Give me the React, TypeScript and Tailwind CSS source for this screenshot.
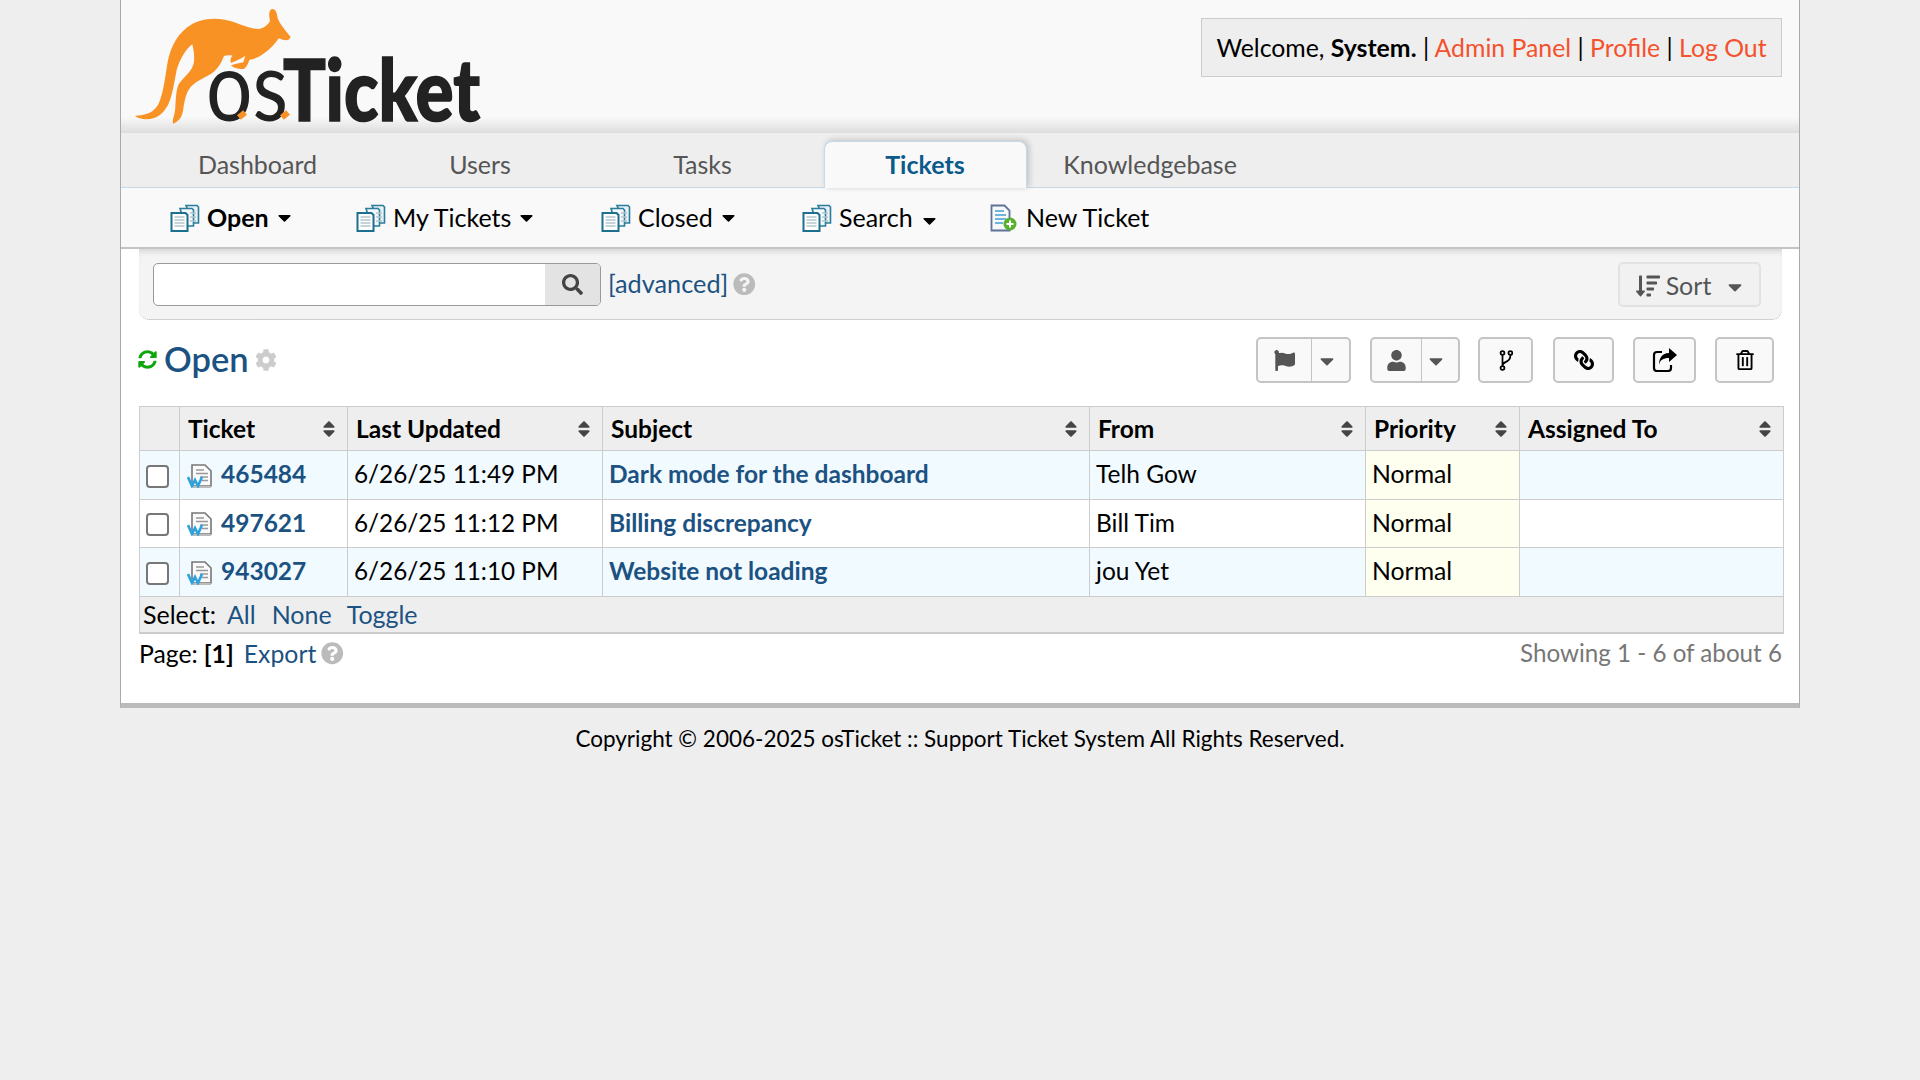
import React from "react";
import { FaFlag, FaUser, FaLink, FaRegTrashAlt, FaSearch, FaSyncAlt, FaCog, FaQuestionCircle, FaSortAmountDown, FaSort, FaCaretDown } from "react-icons/fa";

function Logo() {
  return (
    <svg width="356" height="130" viewBox="0 0 356 130" className="block ml-[9px]">
      <g transform="translate(0,5) scale(0.3333)" fill="#f99225">
        <path d="M15 332 C45 332 70 325 85 298 C98 270 103 235 110 190 C116 140 135 95 170 68 C200 45 240 36 285 44 C320 50 355 72 385 72 C402 70 414 60 420 48 C418 35 415 22 422 14 C432 8 441 18 443 40 C450 58 466 76 482 96 C478 106 468 110 446 100 C435 118 415 138 395 150 C380 160 368 162 358 165 C354 178 350 186 342 192 C330 192 315 190 303 182 C312 176 325 176 340 172 C342 166 344 158 346 152 C335 160 320 166 303 174 C300 168 301 158 308 152 C298 150 290 150 282 153 C275 170 268 186 250 202 C230 216 205 225 188 240 C170 256 165 280 160 310 C158 332 150 348 130 356 C125 350 132 335 135 318 C138 290 136 262 146 238 C160 215 188 200 192 170 C194 150 190 132 187 118 C170 130 150 160 140 195 C132 235 128 270 114 300 C98 330 70 348 40 342 C30 340 20 338 15 332 Z" />
      </g>
      <text x="76" y="121" fontFamily="Lato" fontSize="96" fontWeight="400" fill="#222" textLength="82" lengthAdjust="spacingAndGlyphs">os</text>
      <text x="153" y="121" fontFamily="Lato" fontSize="86" fontWeight="900" fill="#222" stroke="#222" strokeWidth="1.6" textLength="197" lengthAdjust="spacingAndGlyphs">Ticket</text>
      <rect x="108" y="112" width="8" height="6" transform="rotate(-40 112 115)" fill="#f99225" />
      <rect x="151" y="112" width="8" height="6" transform="rotate(-40 155 115)" fill="#f99225" />
    </svg>
  );
}

function Docs() {
  return (
    <svg width="30" height="28" viewBox="0 0 30 28" className="shrink-0">
      <path d="M16 1.500h11l1.500 1.500v16h-5z" fill="#e8f0f4" stroke="#2a7d9b" strokeWidth="1.6" />
      <path d="M10 4.500h12l1.500 1.500v16h-8z" fill="#f4f8fa" stroke="#2a7d9b" strokeWidth="1.6" />
      <path d="M1.500 9h14l2 2v16h-16z" fill="#fff" stroke="#1d6f8f" strokeWidth="2" />
      <path d="M4.500 13h10M4.500 16h10M4.500 19h10M4.500 22h10" stroke="#b4c6ce" strokeWidth="1.6" />
      <path d="M20 9h6M20 13h6M20 17h6" stroke="#b4c6ce" strokeWidth="1.4" />
    </svg>
  );
}

function NewDoc() {
  return (
    <svg width="28" height="28" viewBox="0 0 28 28" className="shrink-0">
      <path d="M1.500 1.500h13l5 5v20h-18z" fill="#f6f9fc" stroke="#5f7396" strokeWidth="1.8" />
      <path d="M5 7h9M5 11h11M5 15h11M5 19h8" stroke="#70b4d8" strokeWidth="1.8" />
      <circle cx="20" cy="20" r="6.500" fill="#58b02c" />
      <path d="M20 16.500v7M16.500 20h7" stroke="#fff" strokeWidth="2" />
    </svg>
  );
}

function TicketIcon() {
  return (
    <svg width="26" height="26" viewBox="0 0 26 26" className="shrink-0">
      <path d="M5 3h13l6 6v15H5z" fill="#fafafa" stroke="#777" strokeWidth="1.6" />
      <path d="M6 25h18" stroke="#bbb" strokeWidth="2" />
      <path d="M9 8h8M9 11.500h12M13 15h8M15 18.500h6" stroke="#999" strokeWidth="1.500" />
      <path d="M1 15l4 9 3-6 3 6 4-9" fill="none" stroke="#2aa3e0" strokeWidth="2.600" />
    </svg>
  );
}

function ForkIcon() {
  return (
    <svg width="14" height="21" viewBox="0 0 16 24" fill="none" stroke="#000" strokeWidth="2">
      <circle cx="4" cy="3.500" r="2.200" />
      <circle cx="4" cy="20.500" r="2.200" />
      <circle cx="13" cy="3.500" r="2.200" />
      <path d="M4 6v12M13 6c0 5-2 6-4 7-3 1.500-5 2-5 5" />
    </svg>
  );
}

function ShareIcon() {
  return (
    <svg width="26" height="24" viewBox="0 0 26 24" fill="none">
      <path d="M10 4H5a3 3 0 0 0-3 3v13a3 3 0 0 0 3 3h11a3 3 0 0 0 3-3v-3" stroke="#000" strokeWidth="2.200" />
      <path d="M17 0l8 7-8 7V10c-6 0-9 2-10 7 0-7 3-12 10-12z" fill="#000" />
    </svg>
  );
}

const tabs = ["Dashboard", "Users", "Tasks"];

function SubItem({ label, width, bold, lift }: { label: string; width: string; bold?: boolean; lift?: boolean }) {
  return (
    <div className={`flex items-center shrink-0 ${width}`}>
      <Docs />
      <span className={`ml-[7px] ${bold ? "font-bold" : ""}`}>{label}</span>
      <FaCaretDown className={`text-[21px] ${lift ? "ml-[6px] mt-[5px]" : "ml-[5px]"}`} />
    </div>
  );
}

function ActionBtn({ children, width }: { children: React.ReactNode; width: string }) {
  return (
    <button className={`h-[46px] ${width} flex items-center justify-center rounded-[5px] border-2 border-[#c4c4c4] bg-[#f9f9f9] text-[19px] text-black`}>
      {children}
    </button>
  );
}

function SplitBtn({ icon, width, left }: { icon: React.ReactNode; width: string; left: string }) {
  return (
    <div className={`h-[46px] ${width} flex rounded-[5px] border-2 border-[#c4c4c4] bg-[#f9f9f9] text-[#555555]`}>
      <div className={`${left} flex items-center justify-center border-r border-[#c4c4c4] text-[21px]`}>{icon}</div>
      <div className="flex-1 flex items-center justify-center pr-[8px] pt-[2px] text-[22px]"><FaCaretDown /></div>
    </div>
  );
}

const headers = ["Ticket", "Last Updated", "Subject", "From", "Priority", "Assigned To"];
const rows = [
  { id: "465484", date: "6/26/25 11:49 PM", subject: "Dark mode for the dashboard", from: "Telh Gow", alt: true },
  { id: "497621", date: "6/26/25 11:12 PM", subject: "Billing discrepancy", from: "Bill Tim", alt: false },
  { id: "943027", date: "6/26/25 11:10 PM", subject: "Website not loading", from: "jou Yet", alt: true },
];

export default function App() {
  return (
    <div className="min-h-[1080px] bg-[#eeeeee] font-['Lato',sans-serif] text-[24.5px] text-black">
      <div className="mx-auto w-[1680px] bg-white border-x border-[#aaaaaa] border-b-[5px] border-b-[#bbbbbb]">
        <header className="h-[133px] flex justify-between bg-gradient-to-b from-[#f9f9f9] from-[88%] to-[#dddddd]">
          <Logo />
          <div className="mt-[18px] mr-[17px] h-[59px] w-[581px] flex items-center justify-center bg-[#eeeeee] border border-[#cccccc] whitespace-pre text-[24.8px]">
            <span>Welcome, <b>System.</b> | <span className="text-[#f4512c]">Admin Panel</span> | <span className="text-[#f4512c]">Profile</span> | <span className="text-[#f4512c]">Log Out</span></span>
          </div>
        </header>

        <nav className="h-[55px] flex items-end gap-[19.5px] pl-[35px] bg-[#eeeeee] border-b border-[#c5d9e8] text-[25px] text-[#555555]">
          {tabs.map((t) => (
            <div key={t} className="w-[203px] h-[46px] pt-[1px] flex items-center justify-center">{t}</div>
          ))}
          <div className="w-[203px] h-[47px] -mb-px flex items-center justify-center bg-[#f9f9f9] border border-b-0 border-[#c5d9e8] rounded-t-[8px] font-bold text-[#0a5a8a] shadow-[2px_-1px_6px_rgba(0,0,0,0.2)]">Tickets</div>
          <div className="w-[208px] h-[46px] pt-[1px] flex items-center justify-center">Knowledgebase</div>
        </nav>

        <div className="h-[61px] flex items-center pl-[49px] bg-[#f9f9f9] border-b-2 border-[#c4c4c4] text-[25px]">
          <SubItem label="Open" width="w-[186px]" bold />
          <SubItem label="My Tickets" width="w-[245px]" />
          <SubItem label="Closed" width="w-[201px]" />
          <SubItem label="Search" width="w-[188px]" lift />
          <div className="flex items-center">
            <NewDoc />
            <span className="ml-[8px]">New Ticket</span>
          </div>
        </div>

        <main className="pl-[18px] pr-[17px] h-[454px]">
          <div className="h-[71px] pl-[14px] pr-[21px] flex items-center bg-[#f4f4f4] rounded-b-[10px] border-b border-dotted border-[#aaaaaa] shadow-[inset_0_6px_6px_-4px_rgba(0,0,0,0.15)]">
            <div className="w-[448px] h-[43px] flex bg-white border border-[#999999] rounded-[5px] overflow-hidden">
              <div className="flex-1" />
              <div className="w-[55px] bg-[#e3e3e3] flex items-center justify-center text-[21px] text-[#444]"><FaSearch /></div>
            </div>
            <span className="ml-[7px] text-[25.3px] text-[#1c5282]">[advanced]</span>
            <FaQuestionCircle className="ml-[5px] text-[22.5px] text-[#bbbbbb]" />
            <button className="ml-auto mt-[1px] h-[45px] w-[143px] pt-[2px] pl-[3px] flex items-center justify-center gap-[6px] bg-[#f1f1f1] border-2 border-[#e2e2e2] rounded-[5px] text-[#555555]">
              <FaSortAmountDown className="text-[24px]" />
              <span className="text-[25px]">Sort</span>
              <FaCaretDown className="ml-[7px] mt-[2px] text-[22px]" />
            </button>
          </div>

          <div className="h-[86px] flex items-center pb-[7px] pr-[8px] -ml-px">
            <FaSyncAlt className="text-[19px] text-[#0da60d]" />
            <h2 className="ml-[7px] text-[34.5px] font-semibold leading-none text-[#1c5282]">Open</h2>
            <FaCog className="ml-[6px] text-[22px] text-[#cccccc]" />
            <div className="ml-auto flex items-center mt-[1px]">
              <SplitBtn icon={<FaFlag />} width="w-[95px]" left="w-[54px]" />
              <div className="ml-[19px]"><SplitBtn icon={<FaUser />} width="w-[90px]" left="w-[50px]" /></div>
              <div className="ml-[18px]"><ActionBtn width="w-[55px]"><ForkIcon /></ActionBtn></div>
              <div className="ml-[20px]"><ActionBtn width="w-[61px]"><FaLink className="-scale-x-100 text-[20px]" /></ActionBtn></div>
              <div className="ml-[19px]"><ActionBtn width="w-[63px]"><ShareIcon /></ActionBtn></div>
              <div className="ml-[19px]"><ActionBtn width="w-[59px]"><FaRegTrashAlt className="text-[20px]" /></ActionBtn></div>
            </div>
          </div>

          <table className="table-fixed border-collapse w-[1644px]">
            <colgroup>
              <col className="w-[40px]" />
              <col className="w-[168px]" />
              <col className="w-[255px]" />
              <col className="w-[487px]" />
              <col className="w-[276px]" />
              <col className="w-[154px]" />
              <col className="w-[264px]" />
            </colgroup>
            <thead>
              <tr className="h-[44px] bg-[#eeeeee]">
                <th className="border border-[#cccccc]" />
                {headers.map((h) => (
                  <th key={h} className="border border-[#cccccc] pl-[8px] pr-[8.5px] pt-[1px] text-left font-bold">
                    <div className="flex items-center justify-between">
                      <span>{h}</span>
                      <FaSort className="text-[20px] text-[#444] -mt-[1px]" />
                    </div>
                  </th>
                ))}
              </tr>
            </thead>
            <tbody>
              {rows.map((r) => (
                <tr key={r.id} className={`${r.alt ? "h-[49px] bg-[#f0faff]" : "h-[48px] bg-white"}`}>
                  <td className="border border-[#cccccc] pr-[4px] pb-[1px] text-center align-middle leading-none">
                    <span className="inline-block align-middle w-[23px] h-[23px] bg-white border-2 border-[#777777] rounded-[4px]" />
                  </td>
                  <td className="border border-[#cccccc] pl-[7px] pb-[1px]">
                    <div className="flex items-center">
                      <TicketIcon />
                      <span className="ml-[8px] font-bold text-[#1c5282]">{r.id}</span>
                    </div>
                  </td>
                  <td className="border border-[#cccccc] pl-[6px] pb-[1px] text-[24.3px]">{r.date}</td>
                  <td className="border border-[#cccccc] pl-[6px] pb-[1px] font-bold text-[#1c5282]">{r.subject}</td>
                  <td className="border border-[#cccccc] pl-[6px] pb-[1px]">{r.from}</td>
                  <td className="border border-[#cccccc] pl-[6px] pb-[2px] bg-[#fffff0] text-[24.8px]">Normal</td>
                  <td className="border border-[#cccccc]" />
                </tr>
              ))}
            </tbody>
            <tfoot>
              <tr className="h-[36px] bg-[#eeeeee]">
                <td colSpan={7} className="border border-[#cccccc] border-b-2 pl-[3px] text-[25px] leading-[31px]">
                  <span>Select:</span>
                  <span className="ml-[11px] text-[#1c5282]">All</span>
                  <span className="ml-[16px] text-[#1c5282]">None</span>
                  <span className="ml-[15px] text-[#1c5282]">Toggle</span>
                </td>
              </tr>
            </tfoot>
          </table>

          <div className="mt-[2px] flex items-center justify-between h-[36px]">
            <div className="flex items-center text-[24.8px]">
              <span>Page:</span>
              <b className="ml-[6px]">[1]</b>
              <span className="ml-[10px] text-[#1c5282]">Export</span>
              <FaQuestionCircle className="ml-[5px] text-[22.5px] text-[#bbbbbb]" />
            </div>
            <span className="text-[24.2px] text-[#777777]">Showing 1 - 6 of about 6</span>
          </div>
        </main>
      </div>
      <footer className="mt-[17px] text-center text-[22.5px] leading-[27px]">Copyright © 2006-2025 osTicket :: Support Ticket System All Rights Reserved.</footer>
    </div>
  );
}
